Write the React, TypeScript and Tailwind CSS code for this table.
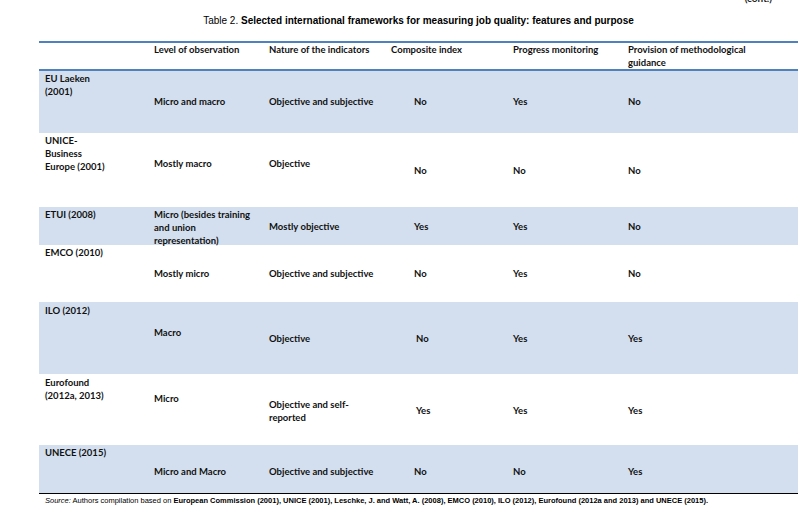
type Cell = { text: string[]; pt: string; pl?: string };
type Row = { h: string; band: boolean; cells: Cell[] };

const cols = ["w-[115px] pl-[6px]", "w-[115px]", "w-[122px]", "w-[122px]", "w-[115px]", "flex-1"];

const rows: Row[] = [
  {
    h: "h-[62px]",
    band: true,
    cells: [
      { text: ["EU Laeken", "(2001)"], pt: "pt-[1px]" },
      { text: ["Micro and macro"], pt: "pt-[24px]" },
      { text: ["Objective and subjective"], pt: "pt-[24px]" },
      { text: ["No"], pt: "pt-[24px]", pl: "pl-[23px]" },
      { text: ["Yes"], pt: "pt-[24px]" },
      { text: ["No"], pt: "pt-[24px]" },
    ],
  },
  {
    h: "h-[74px]",
    band: false,
    cells: [
      { text: ["UNICE-", "Business", "Europe (2001)"], pt: "pt-[1px]" },
      { text: ["Mostly macro"], pt: "pt-[24px]" },
      { text: ["Objective"], pt: "pt-[24px]" },
      { text: ["No"], pt: "pt-[31px]", pl: "pl-[23px]" },
      { text: ["No"], pt: "pt-[31px]" },
      { text: ["No"], pt: "pt-[31px]" },
    ],
  },
  {
    h: "h-[38px]",
    band: true,
    cells: [
      { text: ["ETUI (2008)"], pt: "pt-[1px]" },
      { text: ["Micro (besides training", "and union", "representation)"], pt: "pt-[1px]" },
      { text: ["Mostly objective"], pt: "pt-[13px]" },
      { text: ["Yes"], pt: "pt-[13px]", pl: "pl-[23px]" },
      { text: ["Yes"], pt: "pt-[13px]" },
      { text: ["No"], pt: "pt-[13px]" },
    ],
  },
  {
    h: "h-[57px]",
    band: false,
    cells: [
      { text: ["EMCO (2010)"], pt: "pt-[1px]" },
      { text: ["Mostly micro"], pt: "pt-[22px]" },
      { text: ["Objective and subjective"], pt: "pt-[22px]" },
      { text: ["No"], pt: "pt-[22px]", pl: "pl-[23px]" },
      { text: ["Yes"], pt: "pt-[22px]" },
      { text: ["No"], pt: "pt-[22px]" },
    ],
  },
  {
    h: "h-[72px]",
    band: true,
    cells: [
      { text: ["ILO (2012)"], pt: "pt-[2px]" },
      { text: ["Macro"], pt: "pt-[24px]" },
      { text: ["Objective"], pt: "pt-[30px]" },
      { text: ["No"], pt: "pt-[30px]", pl: "pl-[25px]" },
      { text: ["Yes"], pt: "pt-[30px]" },
      { text: ["Yes"], pt: "pt-[30px]" },
    ],
  },
  {
    h: "h-[71px]",
    band: false,
    cells: [
      { text: ["Eurofound", "(2012a, 2013)"], pt: "pt-[2px]" },
      { text: ["Micro"], pt: "pt-[18px]" },
      { text: ["Objective and self-", "reported"], pt: "pt-[24px]" },
      { text: ["Yes"], pt: "pt-[30px]", pl: "pl-[25px]" },
      { text: ["Yes"], pt: "pt-[30px]" },
      { text: ["Yes"], pt: "pt-[30px]" },
    ],
  },
  {
    h: "h-[48px]",
    band: true,
    cells: [
      { text: ["UNECE (2015)"], pt: "pt-[1px]" },
      { text: ["Micro and Macro"], pt: "pt-[20px]" },
      { text: ["Objective and subjective"], pt: "pt-[20px]" },
      { text: ["No"], pt: "pt-[20px]", pl: "pl-[23px]" },
      { text: ["No"], pt: "pt-[20px]" },
      { text: ["Yes"], pt: "pt-[20px]" },
    ],
  },
];

const headers = [
  [""],
  ["Level of observation"],
  ["Nature of the indicators"],
  ["Composite index"],
  ["Progress monitoring"],
  ["Provision of methodological", "guidance"],
];

export default function App() {
  return (
    <div className="w-[798px] h-[507px] bg-white overflow-hidden relative text-black">
      <div className="h-[4px] overflow-hidden flex justify-end pr-[26px]">
        <span className="font-['Lato',sans-serif] font-bold text-[10px] leading-[10px] -mt-[7px] text-[#222]">
          (cont.)
        </span>
      </div>

      <div className="ml-[39px]">
        <div className="h-[37px] pt-[11px] text-center font-['Liberation_Sans',Arial,sans-serif] text-[10px] leading-[12px]">
          Table 2. <span className="font-bold">Selected international frameworks for measuring job quality: features and purpose</span>
        </div>

        <div className="font-['Lato',sans-serif] font-bold text-[9.5px] leading-[13px] text-[#111]">
          <div className="border-t-2 border-b-2 border-[#4f81bd] h-[30px] flex">
            {headers.map((h, i) => (
              <div key={i} className={cols[i]}>
                {h.map((l) => (
                  <div key={l}>{l}</div>
                ))}
              </div>
            ))}
          </div>

          {rows.map((r, ri) => (
            <div key={ri} className={`flex ${r.h} ${r.band ? "bg-[#d3dfee]" : "bg-white"}`}>
              {r.cells.map((c, ci) => (
                <div key={ci} className={`${cols[ci]} ${c.pt} ${c.pl ?? ""}`}>
                  {c.text.map((l) => (
                    <div key={l} className="whitespace-nowrap">
                      {l}
                    </div>
                  ))}
                </div>
              ))}
            </div>
          ))}

          <div className="border-t border-black" />
        </div>

        <div className="pl-[6px] pt-[2px] font-['Liberation_Sans',Arial,sans-serif] text-[7.5px] leading-[9px] whitespace-nowrap">
          <span className="italic">Source:</span> Authors compilation based on{" "}
          <span className="font-bold">
            European Commission (2001), UNICE (2001), Leschke, J. and Watt, A. (2008), EMCO (2010), ILO (2012), Eurofound (2012a and 2013) and UNECE (2015).
          </span>
        </div>
      </div>
    </div>
  );
}
